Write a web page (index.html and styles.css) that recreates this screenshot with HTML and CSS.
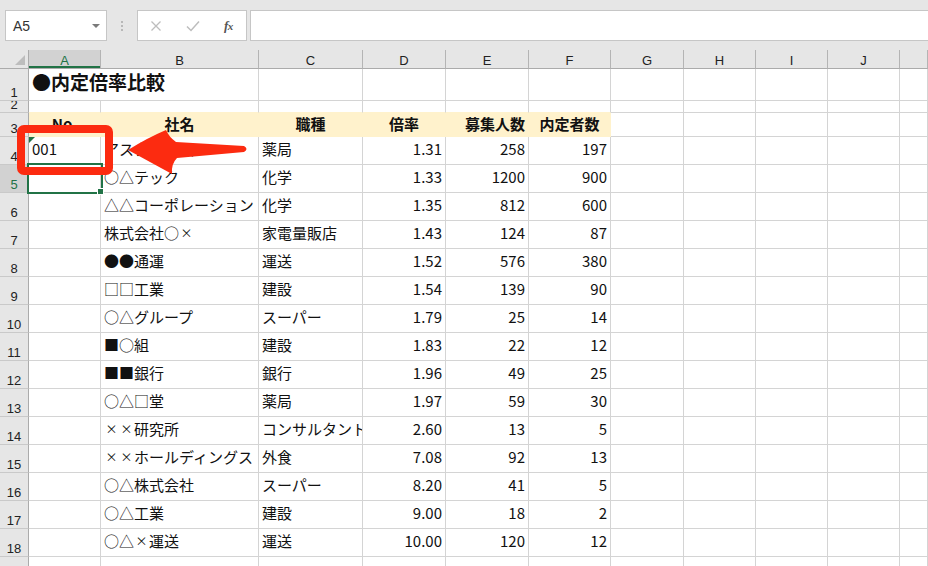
FILE: index.html
```html
<!DOCTYPE html>
<html lang="ja">
<head>
<meta charset="utf-8">
<title>内定倍率比較</title>
<link rel="stylesheet" href="styles.css">
</head>
<body>
<div class="app">
  <div class="toolbar">
    <div class="namebox"><span>A5</span><span class="caret"></span></div>
    <div class="sep">
      <svg width="4" height="12" viewBox="0 0 4 12"><circle cx="2" cy="2" r="1" fill="#a8a8a8"/><circle cx="2" cy="6" r="1" fill="#a8a8a8"/><circle cx="2" cy="10" r="1" fill="#a8a8a8"/></svg>
    </div>
    <div class="fbtns">
      <svg class="ico" width="12" height="12" viewBox="0 0 12 12"><path d="M1.5 1.5 L10.5 10.5 M10.5 1.5 L1.5 10.5" stroke="#bdbdbd" stroke-width="1.3" fill="none"/></svg>
      <svg class="ico" width="14" height="12" viewBox="0 0 14 12"><path d="M1 6.5 L5 10.5 L13 1.5" stroke="#bdbdbd" stroke-width="1.5" fill="none"/></svg>
      <span class="fx">f<span class="fxx">x</span></span>
    </div>
    <div class="finput"></div>
  </div>

  <div class="sheet">
    <div class="row colhead">
      <div class="corner"><svg width="12" height="12" viewBox="0 0 12 12"><path d="M11 1 L11 11 L1 11 Z" fill="#bdbdbd"/></svg></div>
      <div class="ch selcol">A</div><div class="ch">B</div><div class="ch">C</div><div class="ch">D</div><div class="ch">E</div><div class="ch">F</div><div class="ch">G</div><div class="ch">H</div><div class="ch">I</div><div class="ch">J</div><div class="ch"></div>
    </div>

    <div class="row h32">
      <div class="rh">1</div>
      <div class="c title span2">●内定倍率比較</div><div class="c"></div><div class="c"></div><div class="c"></div><div class="c"></div><div class="c"></div><div class="c"></div><div class="c"></div><div class="c"></div><div class="c"></div>
    </div>

    <div class="row h12">
      <div class="rh">2</div>
      <div class="c gb"></div><div class="c gb"></div><div class="c gb"></div><div class="c gb"></div><div class="c gb"></div><div class="c gb"></div><div class="c"></div><div class="c"></div><div class="c"></div><div class="c"></div><div class="c"></div>
    </div>

    <div class="row h24">
      <div class="rh">3</div>
      <div class="c gold hd">No.</div><div class="c gold hd">社名</div><div class="c gold hd">職種</div><div class="c gold hd">倍率</div><div class="c gold hd hr">募集人数</div><div class="c gold hd">内定者数</div><div class="c"></div><div class="c"></div><div class="c"></div><div class="c"></div><div class="c"></div>
    </div>

    <div class="row h28">
      <div class="rh">4</div>
      <div class="c">001</div><div class="c">アスター薬品</div><div class="c">薬局</div><div class="c num">1.31</div><div class="c num">258</div><div class="c num">197</div><div class="c"></div><div class="c"></div><div class="c"></div><div class="c"></div><div class="c"></div>
    </div>

    <div class="row h28">
      <div class="rh selrow">5</div>
      <div class="c"></div><div class="c">○△テック</div><div class="c">化学</div><div class="c num">1.33</div><div class="c num">1200</div><div class="c num">900</div><div class="c"></div><div class="c"></div><div class="c"></div><div class="c"></div><div class="c"></div>
    </div>

    <div class="row h28">
      <div class="rh">6</div>
      <div class="c"></div><div class="c">△△コーポレーション</div><div class="c">化学</div><div class="c num">1.35</div><div class="c num">812</div><div class="c num">600</div><div class="c"></div><div class="c"></div><div class="c"></div><div class="c"></div><div class="c"></div>
    </div>

    <div class="row h28">
      <div class="rh">7</div>
      <div class="c"></div><div class="c">株式会社○<span class="sm">×</span></div><div class="c">家電量販店</div><div class="c num">1.43</div><div class="c num">124</div><div class="c num">87</div><div class="c"></div><div class="c"></div><div class="c"></div><div class="c"></div><div class="c"></div>
    </div>

    <div class="row h28">
      <div class="rh">8</div>
      <div class="c"></div><div class="c">●●通運</div><div class="c">運送</div><div class="c num">1.52</div><div class="c num">576</div><div class="c num">380</div><div class="c"></div><div class="c"></div><div class="c"></div><div class="c"></div><div class="c"></div>
    </div>

    <div class="row h28">
      <div class="rh">9</div>
      <div class="c"></div><div class="c">□□工業</div><div class="c">建設</div><div class="c num">1.54</div><div class="c num">139</div><div class="c num">90</div><div class="c"></div><div class="c"></div><div class="c"></div><div class="c"></div><div class="c"></div>
    </div>

    <div class="row h28">
      <div class="rh">10</div>
      <div class="c"></div><div class="c">○△グループ</div><div class="c">スーパー</div><div class="c num">1.79</div><div class="c num">25</div><div class="c num">14</div><div class="c"></div><div class="c"></div><div class="c"></div><div class="c"></div><div class="c"></div>
    </div>

    <div class="row h28">
      <div class="rh">11</div>
      <div class="c"></div><div class="c">■○組</div><div class="c">建設</div><div class="c num">1.83</div><div class="c num">22</div><div class="c num">12</div><div class="c"></div><div class="c"></div><div class="c"></div><div class="c"></div><div class="c"></div>
    </div>

    <div class="row h28">
      <div class="rh">12</div>
      <div class="c"></div><div class="c">■■銀行</div><div class="c">銀行</div><div class="c num">1.96</div><div class="c num">49</div><div class="c num">25</div><div class="c"></div><div class="c"></div><div class="c"></div><div class="c"></div><div class="c"></div>
    </div>

    <div class="row h28">
      <div class="rh">13</div>
      <div class="c"></div><div class="c">○△□堂</div><div class="c">薬局</div><div class="c num">1.97</div><div class="c num">59</div><div class="c num">30</div><div class="c"></div><div class="c"></div><div class="c"></div><div class="c"></div><div class="c"></div>
    </div>

    <div class="row h28">
      <div class="rh">14</div>
      <div class="c"></div><div class="c"><span class="sm">×</span><span class="sm">×</span>研究所</div><div class="c">コンサルタント</div><div class="c num">2.60</div><div class="c num">13</div><div class="c num">5</div><div class="c"></div><div class="c"></div><div class="c"></div><div class="c"></div><div class="c"></div>
    </div>

    <div class="row h28">
      <div class="rh">15</div>
      <div class="c"></div><div class="c"><span class="sm">×</span><span class="sm">×</span>ホールディングス</div><div class="c">外食</div><div class="c num">7.08</div><div class="c num">92</div><div class="c num">13</div><div class="c"></div><div class="c"></div><div class="c"></div><div class="c"></div><div class="c"></div>
    </div>

    <div class="row h28">
      <div class="rh">16</div>
      <div class="c"></div><div class="c">○△株式会社</div><div class="c">スーパー</div><div class="c num">8.20</div><div class="c num">41</div><div class="c num">5</div><div class="c"></div><div class="c"></div><div class="c"></div><div class="c"></div><div class="c"></div>
    </div>

    <div class="row h28">
      <div class="rh">17</div>
      <div class="c"></div><div class="c">○△工業</div><div class="c">建設</div><div class="c num">9.00</div><div class="c num">18</div><div class="c num">2</div><div class="c"></div><div class="c"></div><div class="c"></div><div class="c"></div><div class="c"></div>
    </div>

    <div class="row h28">
      <div class="rh">18</div>
      <div class="c"></div><div class="c">○△<span class="sm">×</span>運送</div><div class="c">運送</div><div class="c num">10.00</div><div class="c num">120</div><div class="c num">12</div><div class="c"></div><div class="c"></div><div class="c"></div><div class="c"></div><div class="c"></div>
    </div>

    <div class="row h28">
      <div class="rh">19</div>
      <div class="c"></div><div class="c"></div><div class="c"></div><div class="c"></div><div class="c"></div><div class="c"></div><div class="c"></div><div class="c"></div><div class="c"></div><div class="c"></div><div class="c"></div>
    </div>
  </div>

  <div class="tri"></div>
  <div class="selbox"></div>
  <div class="handle"></div>

  <svg class="annot" width="928" height="566" viewBox="0 0 928 566">
    <rect x="21" y="129" width="88" height="42" rx="3" ry="3" fill="none" stroke="#fc2b10" stroke-width="8"/>
    <path d="M128 150 Q147 138 166 130 Q169 137 176 142 L244 146 Q249 149 244 152 L177 158 Q171 164 172 174 Q150 162 128 150 Z" fill="#fc2b10"/>
  </svg>
</div>
</body>
</html>
```

FILE: styles.css
```css
:root {
  --cols: 29px 72px 158px 104px 83px 83px 82px 73px 72px 72px 72px 1fr;
  --grid: #d4d4d4;
  --green: #217346;
}

html, body {
  margin: 0;
  padding: 0;
  background: #fff;
}

body {
  width: 928px;
  height: 566px;
  overflow: hidden;
  font-family: "Noto Sans CJK JP", "Noto Sans", sans-serif;
  color: #111;
}

.app {
  position: relative;
  width: 928px;
  height: 566px;
  overflow: hidden;
}

/* formula bar */
.toolbar {
  height: 50px;
  background: #e6e6e6;
  display: flex;
  align-items: flex-start;
  padding-top: 10px;
  box-sizing: border-box;
}

.namebox {
  margin-left: 5px;
  width: 102px;
  height: 31px;
  box-sizing: border-box;
  border: 1px solid #c6c6c6;
  background: #fff;
  display: flex;
  align-items: center;
  justify-content: space-between;
  padding: 0 6px 0 7px;
  font: 14px "Liberation Sans", sans-serif;
  color: #333;
}

.caret {
  width: 0;
  height: 0;
  border-left: 4px solid transparent;
  border-right: 4px solid transparent;
  border-top: 4px solid #7a7a7a;
  margin-top: 1px;
}

.sep {
  width: 30px;
  height: 31px;
  display: flex;
  align-items: center;
  justify-content: center;
}

.fbtns {
  width: 110px;
  height: 31px;
  box-sizing: border-box;
  border: 1px solid #c6c6c6;
  background: #fff;
  display: flex;
  align-items: center;
  padding-left: 12px;
  gap: 24px;
}

.fx {
  font: italic bold 13px "Liberation Serif", serif;
  color: #555;
  letter-spacing: -0.5px;
}

.fxx {
  font-size: 11px;
}

.finput {
  flex: 1;
  margin-left: 3px;
  height: 31px;
  box-sizing: border-box;
  border: 1px solid #c6c6c6;
  border-right: none;
  background: #fff;
}

/* sheet */
.row {
  display: grid;
  grid-template-columns: var(--cols);
}

.colhead { height: 19px; }
.h32 { height: 32px; }
.h12 { height: 12px; }
.h24 { height: 24px; }
.h28 { height: 28px; }

.corner {
  background: #e6e6e6;
  border-right: 1px solid #ababab;
  border-bottom: 1px solid #ababab;
  box-sizing: border-box;
  display: flex;
  align-items: flex-end;
  justify-content: flex-end;
  padding: 0 2px 2px 0;
}

.ch {
  background: #e6e6e6;
  border-right: 1px solid #b4b4b4;
  border-bottom: 1px solid #ababab;
  box-sizing: border-box;
  display: flex;
  align-items: flex-end;
  justify-content: center;
  font: 13px/13px "Liberation Sans", sans-serif;
  color: #222;
  padding-bottom: 1px;
}

.selcol {
  background: #d2d2d2;
  color: var(--green);
  box-shadow: inset 0 -2px 0 var(--green);
}

.rh {
  background: #e6e6e6;
  border-right: 1px solid #ababab;
  border-bottom: 1px solid #c9c9c9;
  box-sizing: border-box;
  display: flex;
  align-items: flex-end;
  justify-content: center;
  font: 13px/13px "Liberation Sans", sans-serif;
  color: #222;
  padding-bottom: 1px;
  overflow: hidden;
}

.selrow {
  background: #d2d2d2;
  color: var(--green);
}

.c {
  border-right: 1px solid var(--grid);
  border-bottom: 1px solid var(--grid);
  box-sizing: border-box;
  overflow: hidden;
  white-space: nowrap;
  padding: 0 3px 4px;
  display: flex;
  align-items: center;
  font-size: 15px;
  line-height: 20px;
  min-width: 0;
}

.sm {
  display: inline-block;
  width: 15px;
  text-align: center;
  font-size: 12px;
}

.num { justify-content: flex-end; }

.span2 { grid-column: span 2; }

.title {
  font-size: 19px;
  font-weight: bold;
  padding-left: 3px;
  padding-bottom: 5px;
}

.gb { border-bottom-color: #fff2cc; }

.gold {
  background: #fff2cc;
  border-right-color: #fff2cc;
  border-bottom-color: #fff2cc;
  padding-bottom: 2px;
}

.hd {
  font-weight: bold;
  justify-content: center;
}

.hr {
  justify-content: flex-end;
}

/* overlays */
.tri {
  position: absolute;
  left: 29px;
  top: 137px;
  width: 0;
  height: 0;
  border-top: 6px solid var(--green);
  border-right: 6px solid transparent;
}

.selbox {
  position: absolute;
  left: 27px;
  top: 163px;
  width: 76px;
  height: 31px;
  box-sizing: border-box;
  border: 2px solid var(--green);
}

.handle {
  position: absolute;
  left: 97px;
  top: 188px;
  width: 7px;
  height: 7px;
  box-sizing: border-box;
  background: var(--green);
  border: 1px solid #fff;
}

.annot {
  position: absolute;
  left: 0;
  top: 0;
  pointer-events: none;
}
```
